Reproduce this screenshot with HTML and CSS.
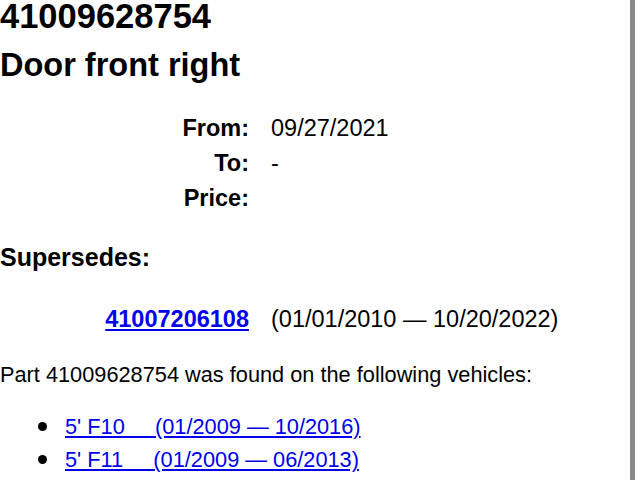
FILE: index.html
```html
<!DOCTYPE HTML>
<html>

<head>
    <meta charset="utf-8">
    <title>41009628754 Door front right</title>
    <link rel="stylesheet" href="styles.css">
</head>

<body>
    <div id="page">
        <h1 class="part-no">41009628754</h1>
        <h2 class="part-name">Door front right</h2>

        <div class="info">
            <span class="label">From:</span>
            <span class="value">09/27/2021</span>
            <span class="label">To:</span>
            <span class="value">-</span>
            <span class="label">Price:</span>
            <span class="value"></span>
        </div>

        <h3 class="section">Supersedes:</h3>
        <div class="info supersedes">
            <span class="label"><a href="#">41007206108</a></span>
            <span class="value">(01/01/2010 &mdash; 10/20/2022)</span>
        </div>

        <p class="found">Part 41009628754 was found on the following vehicles:</p>
        <ul class="vehicles">
            <li><a href="#">5' F10&nbsp;&nbsp;&nbsp;&nbsp;&nbsp;(01/2009 &mdash; 10/2016)</a></li>
            <li><a href="#">5' F11&nbsp;&nbsp;&nbsp;&nbsp;&nbsp;(01/2009 &mdash; 06/2013)</a></li>
        </ul>
    </div>
</body>

</html>
```

FILE: styles.css
```css
html, body {
    margin: 0;
    padding: 0;
    background: #fff;
}
body {
    font-family: "Liberation Sans", Arial, Helvetica, sans-serif;
    font-size: 22px;
    color: #000;
    overflow: hidden;
}
#page {
    width: 630px;
    min-height: 480px;
    border-right: 5px solid #8a8a8a;
}
a {
    color: #0000ee;
}

.part-no {
    font-size: 34.5px;
    line-height: 32px;
    margin: 0;
}
.part-name {
    font-size: 32.5px;
    line-height: 40px;
    margin: 13px 0 0 0;
}

.info {
    display: grid;
    grid-template-columns: 249px auto;
    column-gap: 22px;
    margin-top: 26px;
    font-size: 23.5px;
    line-height: 35px;
}
.info .label {
    text-align: right;
    font-weight: bold;
}

.section {
    font-size: 25px;
    line-height: 30px;
    margin: 26px 0 0 0;
}
.supersedes {
    margin-top: 30px;
}

.found {
    font-size: 21.75px;
    line-height: 30px;
    margin: 23px 0 0 0;
}
.vehicles {
    list-style: none;
    margin: 20px 0 0 0;
    padding-left: 65px;
    line-height: 33px;
    font-size: 21.75px;
}
.vehicles li::before {
    content: "";
    display: inline-block;
    width: 9px;
    height: 9px;
    border-radius: 50%;
    background: #000;
    margin-left: -27px;
    margin-right: 18px;
    vertical-align: 3px;
}
```
